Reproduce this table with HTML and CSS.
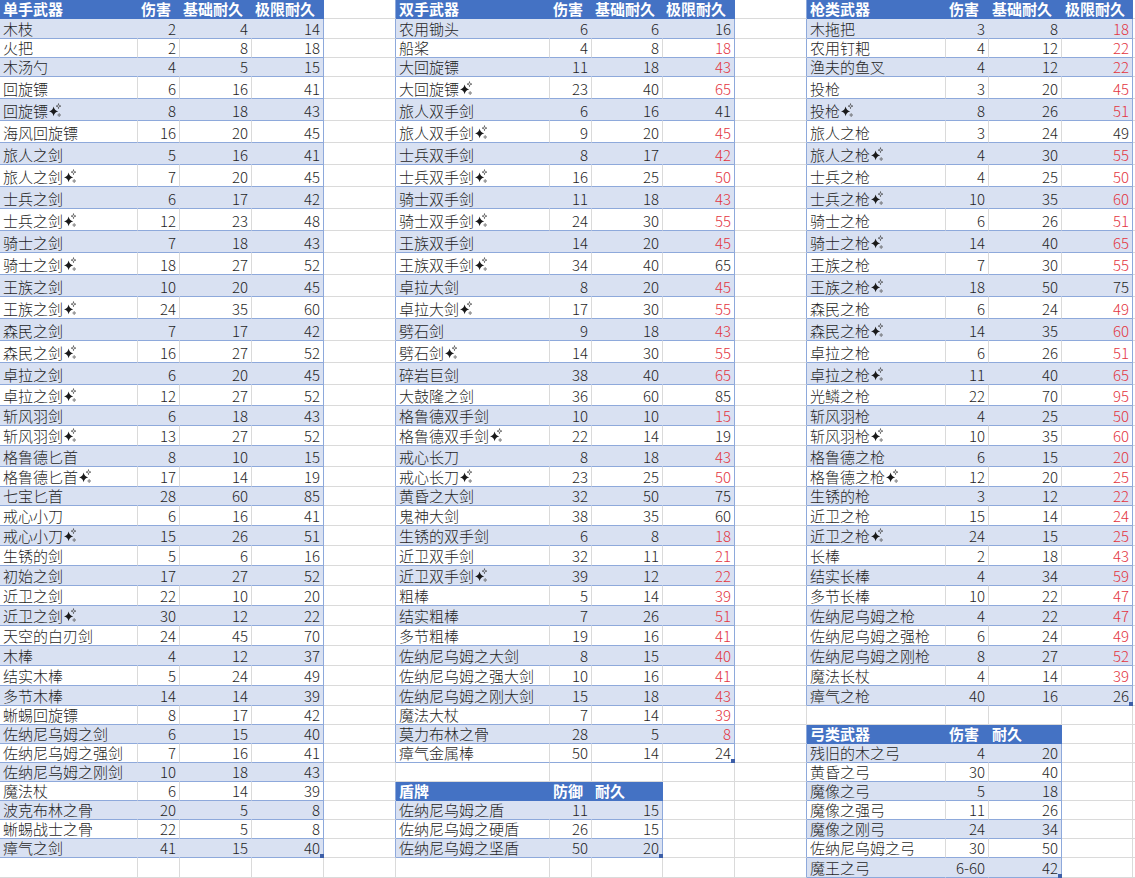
FILE: index.html
```html
<!DOCTYPE html>
<html lang="zh-CN">
<head>
<meta charset="utf-8">
<title>武器耐久表</title>
<link rel="stylesheet" href="styles.css">
</head>
<body>
<svg class="defs" width="0" height="0" aria-hidden="true">
  <symbol id="s" viewBox="0 0 12 14">
    <path d="M4.6 3.6 Q5.3 7.6 9.2 8.4 Q5.3 9.2 4.6 13.2 Q3.9 9.2 0 8.4 Q3.9 7.6 4.6 3.6Z" fill="#1a1a1a"/>
    <path d="M9.5 0.6 C9.7 2.6 10 2.9 11.9 3.1 C10 3.3 9.7 3.6 9.5 5.6 C9.3 3.6 9 3.3 7.1 3.1 C9 2.9 9.3 2.6 9.5 0.6Z" fill="none" stroke="#444" stroke-width="0.7"/>
    <path d="M10.2 10.4 C10.3 11.7 10.4 11.8 11.8 12 C10.4 12.2 10.3 12.3 10.2 13.7 C10.1 12.3 10 12.2 8.6 12 C10 11.8 10.1 11.7 10.2 10.4Z" fill="none" stroke="#555" stroke-width="0.6"/>
  </symbol>
</svg>
<div class="sheet">
<div class="row"><div class="c h">单手武器</div><div class="c h">伤害</div><div class="c h">基础耐久</div><div class="c h">极限耐久</div><div class="c gb"></div><div class="c h">双手武器</div><div class="c h">伤害</div><div class="c h">基础耐久</div><div class="c h">极限耐久</div><div class="c gb"></div><div class="c h">枪类武器</div><div class="c h">伤害</div><div class="c h">基础耐久</div><div class="c h">极限耐久</div><div class="c o"></div></div>

<div class="row odd"><div class="c t">木枝</div><div class="c t n">2</div><div class="c t n">4</div><div class="c t n e">14</div><div class="c gb"></div><div class="c t">农用锄头</div><div class="c t n">6</div><div class="c t n">6</div><div class="c t n e">16</div><div class="c gb"></div><div class="c t">木拖把</div><div class="c t n">3</div><div class="c t n">8</div><div class="c t n e r">18</div><div class="c o"></div></div>

<div class="row"><div class="c t">火把</div><div class="c t n">2</div><div class="c t n">8</div><div class="c t n e">18</div><div class="c gb"></div><div class="c t">船桨</div><div class="c t n">4</div><div class="c t n">8</div><div class="c t n e r">18</div><div class="c gb"></div><div class="c t">农用钉耙</div><div class="c t n">4</div><div class="c t n">12</div><div class="c t n e r">22</div><div class="c o"></div></div>

<div class="row odd"><div class="c t">木汤勺</div><div class="c t n">4</div><div class="c t n">5</div><div class="c t n e">15</div><div class="c gb"></div><div class="c t">大回旋镖</div><div class="c t n">11</div><div class="c t n">18</div><div class="c t n e r">43</div><div class="c gb"></div><div class="c t">渔夫的鱼叉</div><div class="c t n">4</div><div class="c t n">12</div><div class="c t n e r">22</div><div class="c o"></div></div>

<div class="row"><div class="c t">回旋镖</div><div class="c t n">6</div><div class="c t n">16</div><div class="c t n e">41</div><div class="c gb"></div><div class="c t">大回旋镖<svg class="sp"><use href="#s"/></svg></div><div class="c t n">23</div><div class="c t n">40</div><div class="c t n e r">65</div><div class="c gb"></div><div class="c t">投枪</div><div class="c t n">3</div><div class="c t n">20</div><div class="c t n e r">45</div><div class="c o"></div></div>

<div class="row odd"><div class="c t">回旋镖<svg class="sp"><use href="#s"/></svg></div><div class="c t n">8</div><div class="c t n">18</div><div class="c t n e">43</div><div class="c gb"></div><div class="c t">旅人双手剑</div><div class="c t n">6</div><div class="c t n">16</div><div class="c t n e">41</div><div class="c gb"></div><div class="c t">投枪<svg class="sp"><use href="#s"/></svg></div><div class="c t n">8</div><div class="c t n">26</div><div class="c t n e r">51</div><div class="c o"></div></div>

<div class="row"><div class="c t">海风回旋镖</div><div class="c t n">16</div><div class="c t n">20</div><div class="c t n e">45</div><div class="c gb"></div><div class="c t">旅人双手剑<svg class="sp"><use href="#s"/></svg></div><div class="c t n">9</div><div class="c t n">20</div><div class="c t n e r">45</div><div class="c gb"></div><div class="c t">旅人之枪</div><div class="c t n">3</div><div class="c t n">24</div><div class="c t n e">49</div><div class="c o"></div></div>

<div class="row odd"><div class="c t">旅人之剑</div><div class="c t n">5</div><div class="c t n">16</div><div class="c t n e">41</div><div class="c gb"></div><div class="c t">士兵双手剑</div><div class="c t n">8</div><div class="c t n">17</div><div class="c t n e r">42</div><div class="c gb"></div><div class="c t">旅人之枪<svg class="sp"><use href="#s"/></svg></div><div class="c t n">4</div><div class="c t n">30</div><div class="c t n e r">55</div><div class="c o"></div></div>

<div class="row"><div class="c t">旅人之剑<svg class="sp"><use href="#s"/></svg></div><div class="c t n">7</div><div class="c t n">20</div><div class="c t n e">45</div><div class="c gb"></div><div class="c t">士兵双手剑<svg class="sp"><use href="#s"/></svg></div><div class="c t n">16</div><div class="c t n">25</div><div class="c t n e r">50</div><div class="c gb"></div><div class="c t">士兵之枪</div><div class="c t n">4</div><div class="c t n">25</div><div class="c t n e r">50</div><div class="c o"></div></div>

<div class="row odd"><div class="c t">士兵之剑</div><div class="c t n">6</div><div class="c t n">17</div><div class="c t n e">42</div><div class="c gb"></div><div class="c t">骑士双手剑</div><div class="c t n">11</div><div class="c t n">18</div><div class="c t n e r">43</div><div class="c gb"></div><div class="c t">士兵之枪<svg class="sp"><use href="#s"/></svg></div><div class="c t n">10</div><div class="c t n">35</div><div class="c t n e r">60</div><div class="c o"></div></div>

<div class="row"><div class="c t">士兵之剑<svg class="sp"><use href="#s"/></svg></div><div class="c t n">12</div><div class="c t n">23</div><div class="c t n e">48</div><div class="c gb"></div><div class="c t">骑士双手剑<svg class="sp"><use href="#s"/></svg></div><div class="c t n">24</div><div class="c t n">30</div><div class="c t n e r">55</div><div class="c gb"></div><div class="c t">骑士之枪</div><div class="c t n">6</div><div class="c t n">26</div><div class="c t n e r">51</div><div class="c o"></div></div>

<div class="row odd"><div class="c t">骑士之剑</div><div class="c t n">7</div><div class="c t n">18</div><div class="c t n e">43</div><div class="c gb"></div><div class="c t">王族双手剑</div><div class="c t n">14</div><div class="c t n">20</div><div class="c t n e r">45</div><div class="c gb"></div><div class="c t">骑士之枪<svg class="sp"><use href="#s"/></svg></div><div class="c t n">14</div><div class="c t n">40</div><div class="c t n e r">65</div><div class="c o"></div></div>

<div class="row"><div class="c t">骑士之剑<svg class="sp"><use href="#s"/></svg></div><div class="c t n">18</div><div class="c t n">27</div><div class="c t n e">52</div><div class="c gb"></div><div class="c t">王族双手剑<svg class="sp"><use href="#s"/></svg></div><div class="c t n">34</div><div class="c t n">40</div><div class="c t n e">65</div><div class="c gb"></div><div class="c t">王族之枪</div><div class="c t n">7</div><div class="c t n">30</div><div class="c t n e r">55</div><div class="c o"></div></div>

<div class="row odd"><div class="c t">王族之剑</div><div class="c t n">10</div><div class="c t n">20</div><div class="c t n e">45</div><div class="c gb"></div><div class="c t">卓拉大剑</div><div class="c t n">8</div><div class="c t n">20</div><div class="c t n e r">45</div><div class="c gb"></div><div class="c t">王族之枪<svg class="sp"><use href="#s"/></svg></div><div class="c t n">18</div><div class="c t n">50</div><div class="c t n e">75</div><div class="c o"></div></div>

<div class="row"><div class="c t">王族之剑<svg class="sp"><use href="#s"/></svg></div><div class="c t n">24</div><div class="c t n">35</div><div class="c t n e">60</div><div class="c gb"></div><div class="c t">卓拉大剑<svg class="sp"><use href="#s"/></svg></div><div class="c t n">17</div><div class="c t n">30</div><div class="c t n e r">55</div><div class="c gb"></div><div class="c t">森民之枪</div><div class="c t n">6</div><div class="c t n">24</div><div class="c t n e r">49</div><div class="c o"></div></div>

<div class="row odd"><div class="c t">森民之剑</div><div class="c t n">7</div><div class="c t n">17</div><div class="c t n e">42</div><div class="c gb"></div><div class="c t">劈石剑</div><div class="c t n">9</div><div class="c t n">18</div><div class="c t n e r">43</div><div class="c gb"></div><div class="c t">森民之枪<svg class="sp"><use href="#s"/></svg></div><div class="c t n">14</div><div class="c t n">35</div><div class="c t n e r">60</div><div class="c o"></div></div>

<div class="row"><div class="c t">森民之剑<svg class="sp"><use href="#s"/></svg></div><div class="c t n">16</div><div class="c t n">27</div><div class="c t n e">52</div><div class="c gb"></div><div class="c t">劈石剑<svg class="sp"><use href="#s"/></svg></div><div class="c t n">14</div><div class="c t n">30</div><div class="c t n e r">55</div><div class="c gb"></div><div class="c t">卓拉之枪</div><div class="c t n">6</div><div class="c t n">26</div><div class="c t n e r">51</div><div class="c o"></div></div>

<div class="row odd"><div class="c t">卓拉之剑</div><div class="c t n">6</div><div class="c t n">20</div><div class="c t n e">45</div><div class="c gb"></div><div class="c t">碎岩巨剑</div><div class="c t n">38</div><div class="c t n">40</div><div class="c t n e r">65</div><div class="c gb"></div><div class="c t">卓拉之枪<svg class="sp"><use href="#s"/></svg></div><div class="c t n">11</div><div class="c t n">40</div><div class="c t n e r">65</div><div class="c o"></div></div>

<div class="row"><div class="c t">卓拉之剑<svg class="sp"><use href="#s"/></svg></div><div class="c t n">12</div><div class="c t n">27</div><div class="c t n e">52</div><div class="c gb"></div><div class="c t">大鼓隆之剑</div><div class="c t n">36</div><div class="c t n">60</div><div class="c t n e">85</div><div class="c gb"></div><div class="c t">光鳞之枪</div><div class="c t n">22</div><div class="c t n">70</div><div class="c t n e r">95</div><div class="c o"></div></div>

<div class="row odd"><div class="c t">斩风羽剑</div><div class="c t n">6</div><div class="c t n">18</div><div class="c t n e">43</div><div class="c gb"></div><div class="c t">格鲁德双手剑</div><div class="c t n">10</div><div class="c t n">10</div><div class="c t n e r">15</div><div class="c gb"></div><div class="c t">斩风羽枪</div><div class="c t n">4</div><div class="c t n">25</div><div class="c t n e r">50</div><div class="c o"></div></div>

<div class="row"><div class="c t">斩风羽剑<svg class="sp"><use href="#s"/></svg></div><div class="c t n">13</div><div class="c t n">27</div><div class="c t n e">52</div><div class="c gb"></div><div class="c t">格鲁德双手剑<svg class="sp"><use href="#s"/></svg></div><div class="c t n">22</div><div class="c t n">14</div><div class="c t n e">19</div><div class="c gb"></div><div class="c t">斩风羽枪<svg class="sp"><use href="#s"/></svg></div><div class="c t n">10</div><div class="c t n">35</div><div class="c t n e r">60</div><div class="c o"></div></div>

<div class="row odd"><div class="c t">格鲁德匕首</div><div class="c t n">8</div><div class="c t n">10</div><div class="c t n e">15</div><div class="c gb"></div><div class="c t">戒心长刀</div><div class="c t n">8</div><div class="c t n">18</div><div class="c t n e r">43</div><div class="c gb"></div><div class="c t">格鲁德之枪</div><div class="c t n">6</div><div class="c t n">15</div><div class="c t n e r">20</div><div class="c o"></div></div>

<div class="row"><div class="c t">格鲁德匕首<svg class="sp"><use href="#s"/></svg></div><div class="c t n">17</div><div class="c t n">14</div><div class="c t n e">19</div><div class="c gb"></div><div class="c t">戒心长刀<svg class="sp"><use href="#s"/></svg></div><div class="c t n">23</div><div class="c t n">25</div><div class="c t n e r">50</div><div class="c gb"></div><div class="c t">格鲁德之枪<svg class="sp"><use href="#s"/></svg></div><div class="c t n">12</div><div class="c t n">20</div><div class="c t n e r">25</div><div class="c o"></div></div>

<div class="row odd"><div class="c t">七宝匕首</div><div class="c t n">28</div><div class="c t n">60</div><div class="c t n e">85</div><div class="c gb"></div><div class="c t">黄昏之大剑</div><div class="c t n">32</div><div class="c t n">50</div><div class="c t n e">75</div><div class="c gb"></div><div class="c t">生锈的枪</div><div class="c t n">3</div><div class="c t n">12</div><div class="c t n e r">22</div><div class="c o"></div></div>

<div class="row"><div class="c t">戒心小刀</div><div class="c t n">6</div><div class="c t n">16</div><div class="c t n e">41</div><div class="c gb"></div><div class="c t">鬼神大剑</div><div class="c t n">38</div><div class="c t n">35</div><div class="c t n e">60</div><div class="c gb"></div><div class="c t">近卫之枪</div><div class="c t n">15</div><div class="c t n">14</div><div class="c t n e r">24</div><div class="c o"></div></div>

<div class="row odd"><div class="c t">戒心小刀<svg class="sp"><use href="#s"/></svg></div><div class="c t n">15</div><div class="c t n">26</div><div class="c t n e">51</div><div class="c gb"></div><div class="c t">生锈的双手剑</div><div class="c t n">6</div><div class="c t n">8</div><div class="c t n e r">18</div><div class="c gb"></div><div class="c t">近卫之枪<svg class="sp"><use href="#s"/></svg></div><div class="c t n">24</div><div class="c t n">15</div><div class="c t n e r">25</div><div class="c o"></div></div>

<div class="row"><div class="c t">生锈的剑</div><div class="c t n">5</div><div class="c t n">6</div><div class="c t n e">16</div><div class="c gb"></div><div class="c t">近卫双手剑</div><div class="c t n">32</div><div class="c t n">11</div><div class="c t n e r">21</div><div class="c gb"></div><div class="c t">长棒</div><div class="c t n">2</div><div class="c t n">18</div><div class="c t n e r">43</div><div class="c o"></div></div>

<div class="row odd"><div class="c t">初始之剑</div><div class="c t n">17</div><div class="c t n">27</div><div class="c t n e">52</div><div class="c gb"></div><div class="c t">近卫双手剑<svg class="sp"><use href="#s"/></svg></div><div class="c t n">39</div><div class="c t n">12</div><div class="c t n e r">22</div><div class="c gb"></div><div class="c t">结实长棒</div><div class="c t n">4</div><div class="c t n">34</div><div class="c t n e r">59</div><div class="c o"></div></div>

<div class="row"><div class="c t">近卫之剑</div><div class="c t n">22</div><div class="c t n">10</div><div class="c t n e">20</div><div class="c gb"></div><div class="c t">粗棒</div><div class="c t n">5</div><div class="c t n">14</div><div class="c t n e r">39</div><div class="c gb"></div><div class="c t">多节长棒</div><div class="c t n">10</div><div class="c t n">22</div><div class="c t n e r">47</div><div class="c o"></div></div>

<div class="row odd"><div class="c t">近卫之剑<svg class="sp"><use href="#s"/></svg></div><div class="c t n">30</div><div class="c t n">12</div><div class="c t n e">22</div><div class="c gb"></div><div class="c t">结实粗棒</div><div class="c t n">7</div><div class="c t n">26</div><div class="c t n e r">51</div><div class="c gb"></div><div class="c t">佐纳尼乌姆之枪</div><div class="c t n">4</div><div class="c t n">22</div><div class="c t n e r">47</div><div class="c o"></div></div>

<div class="row"><div class="c t">天空的白刃剑</div><div class="c t n">24</div><div class="c t n">45</div><div class="c t n e">70</div><div class="c gb"></div><div class="c t">多节粗棒</div><div class="c t n">19</div><div class="c t n">16</div><div class="c t n e r">41</div><div class="c gb"></div><div class="c t">佐纳尼乌姆之强枪</div><div class="c t n">6</div><div class="c t n">24</div><div class="c t n e r">49</div><div class="c o"></div></div>

<div class="row odd"><div class="c t">木棒</div><div class="c t n">4</div><div class="c t n">12</div><div class="c t n e">37</div><div class="c gb"></div><div class="c t">佐纳尼乌姆之大剑</div><div class="c t n">8</div><div class="c t n">15</div><div class="c t n e r">40</div><div class="c gb"></div><div class="c t">佐纳尼乌姆之刚枪</div><div class="c t n">8</div><div class="c t n">27</div><div class="c t n e r">52</div><div class="c o"></div></div>

<div class="row"><div class="c t">结实木棒</div><div class="c t n">5</div><div class="c t n">24</div><div class="c t n e">49</div><div class="c gb"></div><div class="c t">佐纳尼乌姆之强大剑</div><div class="c t n">10</div><div class="c t n">16</div><div class="c t n e r">41</div><div class="c gb"></div><div class="c t">魔法长杖</div><div class="c t n">4</div><div class="c t n">14</div><div class="c t n e r">39</div><div class="c o"></div></div>

<div class="row odd"><div class="c t">多节木棒</div><div class="c t n">14</div><div class="c t n">14</div><div class="c t n e">39</div><div class="c gb"></div><div class="c t">佐纳尼乌姆之刚大剑</div><div class="c t n">15</div><div class="c t n">18</div><div class="c t n e r">43</div><div class="c gb"></div><div class="c t">瘴气之枪</div><div class="c t n">40</div><div class="c t n">16</div><div class="c t n e hd">26</div><div class="c o"></div></div>

<div class="row"><div class="c t">蜥蜴回旋镖</div><div class="c t n">8</div><div class="c t n">17</div><div class="c t n e">42</div><div class="c gb"></div><div class="c t">魔法大杖</div><div class="c t n">7</div><div class="c t n">14</div><div class="c t n e r">39</div><div class="c"></div><div class="c"></div><div class="c"></div><div class="c"></div><div class="c"></div><div class="c o"></div></div>

<div class="row odd"><div class="c t">佐纳尼乌姆之剑</div><div class="c t n">6</div><div class="c t n">15</div><div class="c t n e">40</div><div class="c gb"></div><div class="c t">莫力布林之骨</div><div class="c t n">28</div><div class="c t n">5</div><div class="c t n e r">8</div><div class="c gb"></div><div class="c h">弓类武器</div><div class="c h">伤害</div><div class="c h">耐久</div><div class="c"></div><div class="c o"></div></div>

<div class="row"><div class="c t">佐纳尼乌姆之强剑</div><div class="c t n">7</div><div class="c t n">16</div><div class="c t n e">41</div><div class="c gb"></div><div class="c t">瘴气金属棒</div><div class="c t n">50</div><div class="c t n">14</div><div class="c t n e hd">24</div><div class="c gb"></div><div class="c t k">残旧的木之弓</div><div class="c t n k">4</div><div class="c t n e k">20</div><div class="c"></div><div class="c o"></div></div>

<div class="row odd"><div class="c t">佐纳尼乌姆之刚剑</div><div class="c t n">10</div><div class="c t n">18</div><div class="c t n e">43</div><div class="c"></div><div class="c"></div><div class="c"></div><div class="c"></div><div class="c"></div><div class="c gb"></div><div class="c t w">黄昏之弓</div><div class="c t n w">30</div><div class="c t n e w">40</div><div class="c"></div><div class="c o"></div></div>

<div class="row"><div class="c t">魔法杖</div><div class="c t n">6</div><div class="c t n">14</div><div class="c t n e">39</div><div class="c gb"></div><div class="c h">盾牌</div><div class="c h">防御</div><div class="c h">耐久</div><div class="c"></div><div class="c gb"></div><div class="c t k">魔像之弓</div><div class="c t n k">5</div><div class="c t n e k">18</div><div class="c"></div><div class="c o"></div></div>

<div class="row odd"><div class="c t">波克布林之骨</div><div class="c t n">20</div><div class="c t n">5</div><div class="c t n e">8</div><div class="c gb"></div><div class="c t">佐纳尼乌姆之盾</div><div class="c t n">11</div><div class="c t n e">15</div><div class="c"></div><div class="c gb"></div><div class="c t w">魔像之强弓</div><div class="c t n w">11</div><div class="c t n e w">26</div><div class="c"></div><div class="c o"></div></div>

<div class="row"><div class="c t">蜥蜴战士之骨</div><div class="c t n">22</div><div class="c t n">5</div><div class="c t n e">8</div><div class="c gb"></div><div class="c t">佐纳尼乌姆之硬盾</div><div class="c t n">26</div><div class="c t n e">15</div><div class="c"></div><div class="c gb"></div><div class="c t k">魔像之刚弓</div><div class="c t n k">24</div><div class="c t n e k">34</div><div class="c"></div><div class="c o"></div></div>

<div class="row odd"><div class="c t">瘴气之剑</div><div class="c t n">41</div><div class="c t n">15</div><div class="c t n e hd">40</div><div class="c gb"></div><div class="c t">佐纳尼乌姆之坚盾</div><div class="c t n">50</div><div class="c t n e hd">20</div><div class="c"></div><div class="c gb"></div><div class="c t w">佐纳尼乌姆之弓</div><div class="c t n w">30</div><div class="c t n e w">50</div><div class="c"></div><div class="c o"></div></div>

<div class="row"><div class="c"></div><div class="c"></div><div class="c"></div><div class="c"></div><div class="c"></div><div class="c"></div><div class="c"></div><div class="c"></div><div class="c"></div><div class="c gb"></div><div class="c t k">魔王之弓</div><div class="c t n k">6-60</div><div class="c t n e k hd">42</div><div class="c"></div><div class="c o"></div></div>
</div>
</body>
</html>
```

FILE: styles.css
```css
* {
  box-sizing: border-box;
}

body {
  margin: 0;
  background: #ffffff;
  font-family: "Noto Sans CJK SC", "Noto Sans", sans-serif;
  font-size: 15px;
  font-weight: 300;
  color: #1f1f1f;
}

.defs {
  position: absolute;
  width: 0;
  height: 0;
  overflow: hidden;
}

.sheet {
  display: grid;
  width: 1135px;
  height: 878px;
  overflow: hidden;
  grid-template-rows:
    19px 20px 19px 19px
    repeat(14, 22px)
    21px 20px 20px 21px 20px 19px
    repeat(10, 20px)
    repeat(8, 19px)
    20px;
}

.row {
  display: grid;
  grid-template-columns: 138px 42px 72px 72px 72px 154px 42px 71px 72px 72px 139px 43px 73px 71px 2px;
}

.c {
  position: relative;
  display: flex;
  align-items: flex-end;
  justify-content: flex-start;
  padding: 0 3px 1px 3px;
  line-height: 17px;
  white-space: nowrap;
  border-right: 1px solid #dadada;
  border-bottom: 1px solid #dadada;
}

.o {
  border-right: 0;
  padding: 0;
}

.gb {
  border-right-color: #8ea9db;
}

.t {
  border-bottom-color: #8ea9db;
}

.n {
  justify-content: flex-end;
}

.r {
  color: #e3353f;
}

.odd .t,
.t.k {
  background: #d9e1f2;
  border-right-color: #d9e1f2;
}

.odd .t.w {
  background: #ffffff;
  border-right-color: #dadada;
}

.t.e,
.odd .t.e {
  border-right-color: #8ea9db;
}

.h {
  background: #4472c4;
  color: #ffffff;
  font-family: "Liberation Sans", "Noto Sans CJK SC", sans-serif;
  font-weight: bold;
  line-height: 17px;
  padding-bottom: 0;
  border-right-color: #4472c4;
  border-bottom-color: #4472c4;
}

.hd::after {
  content: "";
  position: absolute;
  right: -1px;
  bottom: -1px;
  width: 4px;
  height: 4px;
  background: #3d5fa8;
  z-index: 1;
}

.sp {
  width: 12px;
  height: 14px;
  margin-left: 1px;
  margin-bottom: 2px;
  flex: none;
}
```
